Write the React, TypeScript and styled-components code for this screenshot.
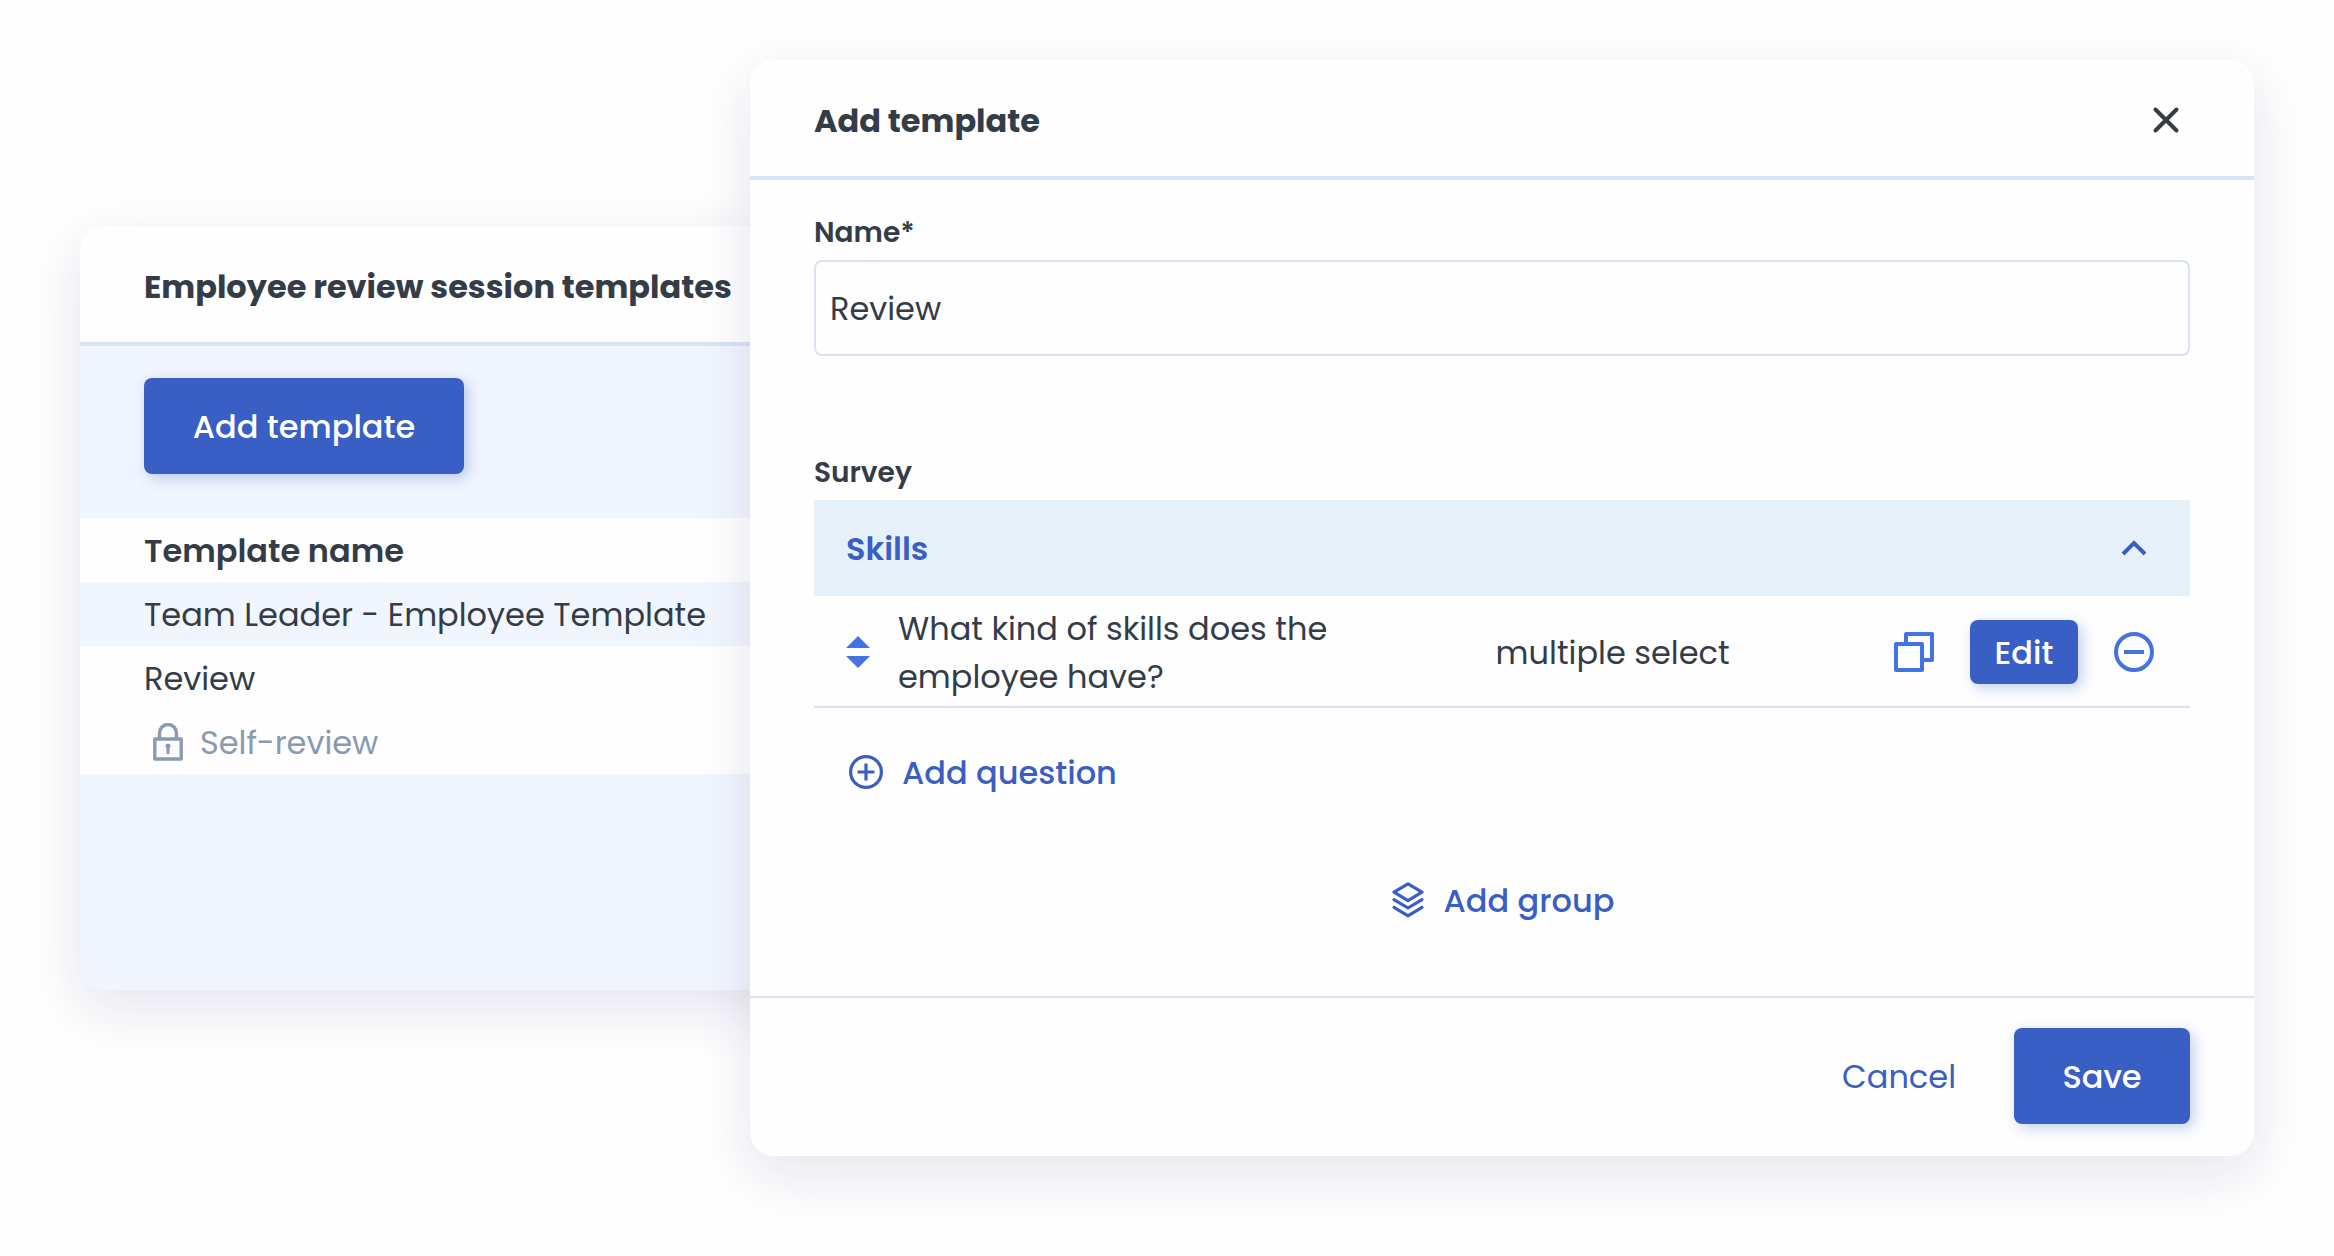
import React, { useState } from 'react';
import styled, { createGlobalStyle } from 'styled-components';

const color = {
  text: '#343c48',
  muted: '#8a9ab3',
  primary: '#395fc4',
  icon: '#4373e0',
  line: '#d9e3f3',
  pale: '#f1f5fd',
  group: '#e5f0f9',
};

const GlobalStyle = createGlobalStyle`
  *, *::before, *::after { box-sizing: border-box; }
  body {
    margin: 0;
    background: #fefefe;
    color: ${color.text};
    font-family: Poppins, Inter, sans-serif;
    font-size: 32px;
    line-height: 48px;
  }
  button, input { font: inherit; }
`;

const Page = styled.div`
  display: grid;
  grid-template-columns: minmax(0, 49fr) minmax(0, 110fr);
  align-items: start;
  min-height: 100vh;
  padding: 60px 80px 100px;
  overflow: hidden;
`;

const Card = styled.section`
  display: flex;
  flex-direction: column;
  border-radius: 24px;
  overflow: hidden;
  box-shadow: 0 18px 56px rgba(30, 20, 120, 0.11);
`;

const TemplatesCard = styled(Card)`
  min-height: 764px;
  margin: 166px -64px 0 0;
  background: ${color.pale};
`;

const DialogCard = styled(Card)`
  z-index: 1;
  background: #fefefe;
`;

const CardHeader = styled.header`
  display: flex;
  align-items: center;
  justify-content: space-between;
  height: 120px;
  padding: 4px 64px 0;
  background: #fefefe;
  border-bottom: 4px solid ${color.line};
`;

const Title = styled.h2`
  margin: 0;
  padding-top: 2px;
  font-size: 32px;
  font-weight: 700;
  white-space: nowrap;
`;

const Toolbar = styled.div`
  padding: 32px 64px 44px;
`;

const PrimaryButton = styled.button<{ $compact?: boolean; $minWidth: number }>`
  min-width: ${(p) => p.$minWidth}px;
  height: ${(p) => (p.$compact ? 64 : 96)}px;
  padding: 2px ${(p) => (p.$compact ? 16 : 32)}px 0;
  border: 0;
  border-radius: 8px;
  background: ${color.primary};
  color: #fff;
  font-weight: 500;
  white-space: nowrap;
  box-shadow: 4px 4px 14px rgba(57, 95, 196, 0.3);
  cursor: pointer;
`;

const PlainButton = styled.button<{ $weight?: number }>`
  display: inline-flex;
  align-items: center;
  gap: 18px;
  padding: 0;
  border: 0;
  background: none;
  color: ${color.primary};
  font-weight: ${(p) => p.$weight ?? 400};
  cursor: pointer;

  svg { display: block; flex: none; }
`;

const IconButton = styled(PlainButton)`
  color: ${color.icon};
`;

const CloseButton = styled(PlainButton)`
  padding: 10px;
  color: ${color.text};
`;

const ButtonText = styled.span`
  padding-top: 2px;
`;

const Table = styled.table`
  width: 100%;
  border-collapse: collapse;
  text-align: left;
`;

const HeadCell = styled.th`
  height: 64px;
  padding: 2px 64px 0;
  background: #fefefe;
  font-weight: 600;
`;

const Cell = styled.td<{ $striped?: boolean; $muted?: boolean }>`
  height: 64px;
  padding: 2px 64px 0;
  background: ${(p) => (p.$striped ? color.pale : '#fefefe')};
  color: ${(p) => (p.$muted ? color.muted : color.text)};
  white-space: nowrap;
`;

const Locked = styled.span`
  display: flex;
  align-items: center;
  gap: 16px;
  padding-left: 8px;
`;

const DialogBody = styled.div`
  display: flex;
  flex-direction: column;
  padding: 32px 64px 71px;
`;

const Label = styled.label`
  padding-top: 1px;
  font-size: 28px;
  line-height: 40px;
  font-weight: 600;
`;

const TextInput = styled.input`
  width: 100%;
  height: 96px;
  margin: 7px 0 96px;
  padding: 2px 14px 0;
  border: 2px solid ${color.line};
  border-radius: 8px;
  background: #fefefe;
  color: ${color.text};
`;

const GroupHeader = styled.div`
  display: flex;
  align-items: center;
  justify-content: space-between;
  height: 96px;
  margin-top: 7px;
  padding: 0 42px 0 32px;
  background: ${color.group};
`;

const GroupTitle = styled.h3`
  margin: 0;
  padding-top: 2px;
  font-size: 32px;
  font-weight: 600;
  color: ${color.primary};
`;

const QuestionRow = styled.div`
  display: grid;
  grid-template-columns: 24px minmax(0, 1fr) auto;
  align-items: center;
  padding: 7px 36px 5px 32px;
  border-bottom: 2px solid ${color.line};
`;

const QuestionText = styled.div`
  display: grid;
  grid-template-columns: minmax(0, 3fr) minmax(0, 2fr);
  align-items: center;
  padding: 2px 0 0 28px;
`;

const Question = styled.p`
  margin: 0;
  padding-right: 80px;
`;

const RowActions = styled.div`
  display: flex;
  align-items: center;
  gap: 36px;
`;

const AddQuestionRow = styled.div`
  display: flex;
  padding: 39px 34px;
`;

const AddGroupRow = styled.div`
  display: flex;
  justify-content: center;
  padding-top: 39px;
`;

const Footer = styled.footer`
  display: flex;
  align-items: center;
  justify-content: flex-end;
  gap: 58px;
  padding: 30px 64px 32px;
  border-top: 2px solid ${color.line};
`;

const CloseIcon = () => (
  <svg width="28" height="28" viewBox="0 0 28 28" fill="none" stroke="currentColor" strokeWidth="4" strokeLinecap="round">
    <path d="M3.5 3.5l21 21M24.5 3.5l-21 21" />
  </svg>
);

const ChevronUpIcon = () => (
  <svg width="28" height="18" viewBox="0 0 28 18" fill="none" stroke="currentColor" strokeWidth="4">
    <path d="M3 15L14 4L25 15" />
  </svg>
);

const SortIcon = () => (
  <svg width="24" height="32" viewBox="0 0 24 32" fill="currentColor">
    <path d="M12 0l12 12H0zM12 32L0 20h24z" />
  </svg>
);

const CopyIcon = () => (
  <svg width="40" height="40" viewBox="0 0 40 40" fill="none" stroke="currentColor" strokeWidth="4" strokeLinejoin="round">
    <path d="M2 12h26v26H2z" />
    <path d="M12 12V2h26v26H28" />
  </svg>
);

const MinusCircleIcon = () => (
  <svg width="40" height="40" viewBox="0 0 40 40" fill="none" stroke="currentColor" strokeWidth="4">
    <circle cx="20" cy="20" r="18" />
    <path d="M10 20h20" />
  </svg>
);

const PlusCircleIcon = () => (
  <svg width="36" height="36" viewBox="0 0 36 36" fill="none" stroke="currentColor" strokeWidth="3.2">
    <circle cx="18" cy="18" r="15.4" />
    <path d="M9.5 18h17M18 9.5v17" />
  </svg>
);

const LayersIcon = () => (
  <svg width="36" height="36" viewBox="-2 0 36 36" fill="none" stroke="currentColor" strokeWidth="3.2" strokeLinejoin="round" strokeLinecap="round">
    <path d="M16 1.8L30 10.2L16 18.6L2 10.2z" />
    <path d="M2 17.6L16 26L30 17.6" />
    <path d="M2 25.4L16 33.8L30 25.4" />
  </svg>
);

const LockIcon = () => (
  <svg width="32" height="40" viewBox="0 0 32 40" fill="none" stroke="currentColor" strokeWidth="3.4" strokeLinejoin="round">
    <path d="M2.8 16h26.4v20H2.8z" />
    <path d="M7.5 16V10a8.5 8.5 0 0 1 17 0v6" />
    <circle cx="16" cy="23" r="2.5" fill="currentColor" stroke="none" />
    <path d="M16 23v8" strokeWidth="3" />
  </svg>
);

export default function App() {
  const [name, setName] = useState('Review');

  return (
    <>
      <GlobalStyle />
      <Page>
        <TemplatesCard>
          <CardHeader>
            <Title>Employee review session templates</Title>
          </CardHeader>
          <Toolbar>
            <PrimaryButton $minWidth={320}>Add template</PrimaryButton>
          </Toolbar>
          <Table>
            <thead>
              <tr>
                <HeadCell scope="col">Template name</HeadCell>
              </tr>
            </thead>
            <tbody>
              <tr>
                <Cell $striped>Team Leader - Employee Template</Cell>
              </tr>
              <tr>
                <Cell>Review</Cell>
              </tr>
              <tr>
                <Cell $muted>
                  <Locked>
                    <LockIcon />
                    Self-review
                  </Locked>
                </Cell>
              </tr>
            </tbody>
          </Table>
        </TemplatesCard>

        <DialogCard role="dialog" aria-labelledby="dialog-title">
          <CardHeader>
            <Title id="dialog-title">Add template</Title>
            <CloseButton aria-label="Close">
              <CloseIcon />
            </CloseButton>
          </CardHeader>
          <DialogBody>
            <Label htmlFor="template-name">Name*</Label>
            <TextInput id="template-name" value={name} onChange={(e) => setName(e.target.value)} />
            <Label as="span">Survey</Label>
            <GroupHeader>
              <GroupTitle>Skills</GroupTitle>
              <PlainButton aria-label="Collapse group">
                <ChevronUpIcon />
              </PlainButton>
            </GroupHeader>
            <QuestionRow>
              <IconButton aria-label="Reorder question">
                <SortIcon />
              </IconButton>
              <QuestionText>
                <Question>What kind of skills does the employee have?</Question>
                <span>multiple select</span>
              </QuestionText>
              <RowActions>
                <IconButton aria-label="Duplicate question">
                  <CopyIcon />
                </IconButton>
                <PrimaryButton $compact $minWidth={108}>Edit</PrimaryButton>
                <IconButton aria-label="Remove question">
                  <MinusCircleIcon />
                </IconButton>
              </RowActions>
            </QuestionRow>
            <AddQuestionRow>
              <PlainButton $weight={500}>
                <PlusCircleIcon />
                <ButtonText>Add question</ButtonText>
              </PlainButton>
            </AddQuestionRow>
            <AddGroupRow>
              <PlainButton $weight={500}>
                <LayersIcon />
                <ButtonText>Add group</ButtonText>
              </PlainButton>
            </AddGroupRow>
          </DialogBody>
          <Footer>
            <PlainButton>
              <ButtonText>Cancel</ButtonText>
            </PlainButton>
            <PrimaryButton $minWidth={176}>Save</PrimaryButton>
          </Footer>
        </DialogCard>
      </Page>
    </>
  );
}
